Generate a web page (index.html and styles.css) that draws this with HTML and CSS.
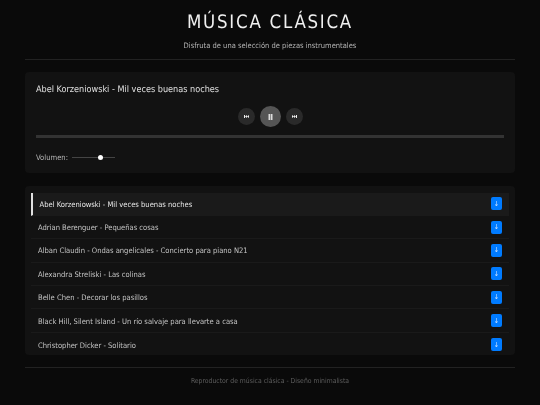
FILE: index.html
```html
<!DOCTYPE html>
<html lang="es">
<head>
    <meta charset="UTF-8">
    <meta name="viewport" content="width=device-width, initial-scale=1.0">
    <title>Música Clásica</title>
    <link rel="stylesheet" href="styles.css">
</head>
<body>
    <div class="container">
        <header class="header">
            <h1>MÚSICA CLÁSICA</h1>
            <p>Disfruta de una selección de piezas instrumentales</p>
        </header>

        <section class="player">
            <div class="now-playing">Abel Korzeniowski - Mil veces buenas noches</div>
            <div class="controls">
                <button class="ctrl">
                    <svg width="5" height="3" viewBox="0 0 5 3"><path d="M0 0h1v3H0zM3 0v3L1 1.500zM5 0v3L3 1.500z" fill="#eee"/></svg>
                </button>
                <button class="ctrl ctrl-main">
                    <svg width="5" height="6" viewBox="0 0 5 6"><path d="M.5 0h1.700v6H.5zM2.800 0h1.700v6H2.800z" fill="#ddd"/></svg>
                </button>
                <button class="ctrl">
                    <svg width="5" height="3" viewBox="0 0 5 3"><path d="M0 0v3l2-1.500zM2 0v3l2-1.500zM4 0h1v3H4z" fill="#eee"/></svg>
                </button>
            </div>
            <div class="progress"></div>
            <div class="volume">
                <span>Volumen:</span>
                <div class="slider"><div class="thumb"></div></div>
            </div>
        </section>

        <ul class="playlist">
            <li class="track active"><span>Abel Korzeniowski - Mil veces buenas noches</span><a class="dl">↓</a></li>
            <li class="track"><span>Adrian Berenguer - Pequeñas cosas</span><a class="dl">↓</a></li>
            <li class="track"><span>Alban Claudin - Ondas angelicales - Concierto para piano N21</span><a class="dl">↓</a></li>
            <li class="track"><span>Alexandra Streliski - Las colinas</span><a class="dl">↓</a></li>
            <li class="track"><span>Belle Chen - Decorar los pasillos</span><a class="dl">↓</a></li>
            <li class="track"><span>Black Hill, Silent Island - Un río salvaje para llevarte a casa</span><a class="dl">↓</a></li>
            <li class="track"><span>Christopher Dicker - Solitario</span><a class="dl">↓</a></li>
        </ul>

        <footer class="footer">Reproductor de música clásica - Diseño minimalista</footer>
    </div>
</body>
</html>
```

FILE: styles.css
```css
* {
    box-sizing: border-box;
}
html, body {
    height: 405px;
    overflow: hidden;
}
body {
    margin: 0;
    background-color: #0a0a0a;
    color: #e0e0e0;
    font-family: "DejaVu Sans Condensed", "DejaVu Sans", sans-serif;
    font-stretch: condensed;
    text-rendering: geometricPrecision;
}
.container {
    width: 490px;
    margin: 0 auto;
    padding-top: 12px;
    will-change: transform;
}
.header {
    text-align: center;
    height: 48px;
    border-bottom: 1px solid #222;
}
.header h1 {
    margin: 0;
    font-size: 18.5px;
    line-height: 22px;
    font-weight: 400;
    letter-spacing: 1.75px;
    color: #f0f0f0;
}
.header p {
    margin: 6px 0 0;
    font-size: 7.5px;
    line-height: 11px;
    color: #b4b4b4;
}
.player {
    margin-top: 12px;
    height: 101px;
    padding: 12px 11px 11px;
    background: #121212;
    border-radius: 4px;
}
.now-playing {
    font-size: 9.05px;
    line-height: 13px;
    color: #e0e0e0;
}
.controls {
    display: flex;
    justify-content: center;
    align-items: center;
    gap: 5px;
    margin-top: 9px;
}
.ctrl {
    display: flex;
    align-items: center;
    justify-content: center;
    width: 17px;
    height: 17px;
    padding: 0;
    border: none;
    border-radius: 50%;
    background: #2a2a2a;
}
.ctrl-main {
    width: 21px;
    height: 21px;
    background: #555;
}
.progress {
    height: 3px;
    margin-top: 8px;
    background: #333;
}
.volume {
    display: flex;
    align-items: center;
    gap: 4px;
    margin-top: 15px;
    font-size: 7.6px;
    color: #b4b4b4;
}
.slider {
    position: relative;
    width: 43px;
    height: 1px;
    background: #444;
}
.thumb {
    position: absolute;
    left: 26px;
    top: -2px;
    width: 5px;
    height: 5px;
    border-radius: 50%;
    background: #fff;
}
.playlist {
    list-style: none;
    margin: 13px 0 0;
    height: 169px;
    padding: 6.5px 6px 6px;
    background: #121212;
    border-radius: 4px;
}
.track {
    display: flex;
    align-items: center;
    justify-content: space-between;
    height: 23.4px;
    padding: 0 7px 0 7px;
    border-bottom: 1px solid #1a1a1a;
    font-size: 7.55px;
    color: #c4c4c4;
}
.track span {
    padding-top: 1px;
}
.track:last-child {
    border-bottom: none;
}
.track.active {
    padding-left: 6.5px;
    border-left: 2px solid #e0e0e0;
    background: #1a1a1a;
    color: #e8e8e8;
}
.dl {
    display: flex;
    align-items: center;
    justify-content: center;
    width: 11px;
    height: 13px;
    border-radius: 2px;
    background: #007bff;
    color: #cfe4ff;
    font-size: 7px;
}
.footer {
    margin-top: 12px;
    padding-top: 9px;
    border-top: 1px solid #222;
    text-align: center;
    font-size: 6.8px;
    line-height: 9px;
    color: #5e5e5e;
}
```
